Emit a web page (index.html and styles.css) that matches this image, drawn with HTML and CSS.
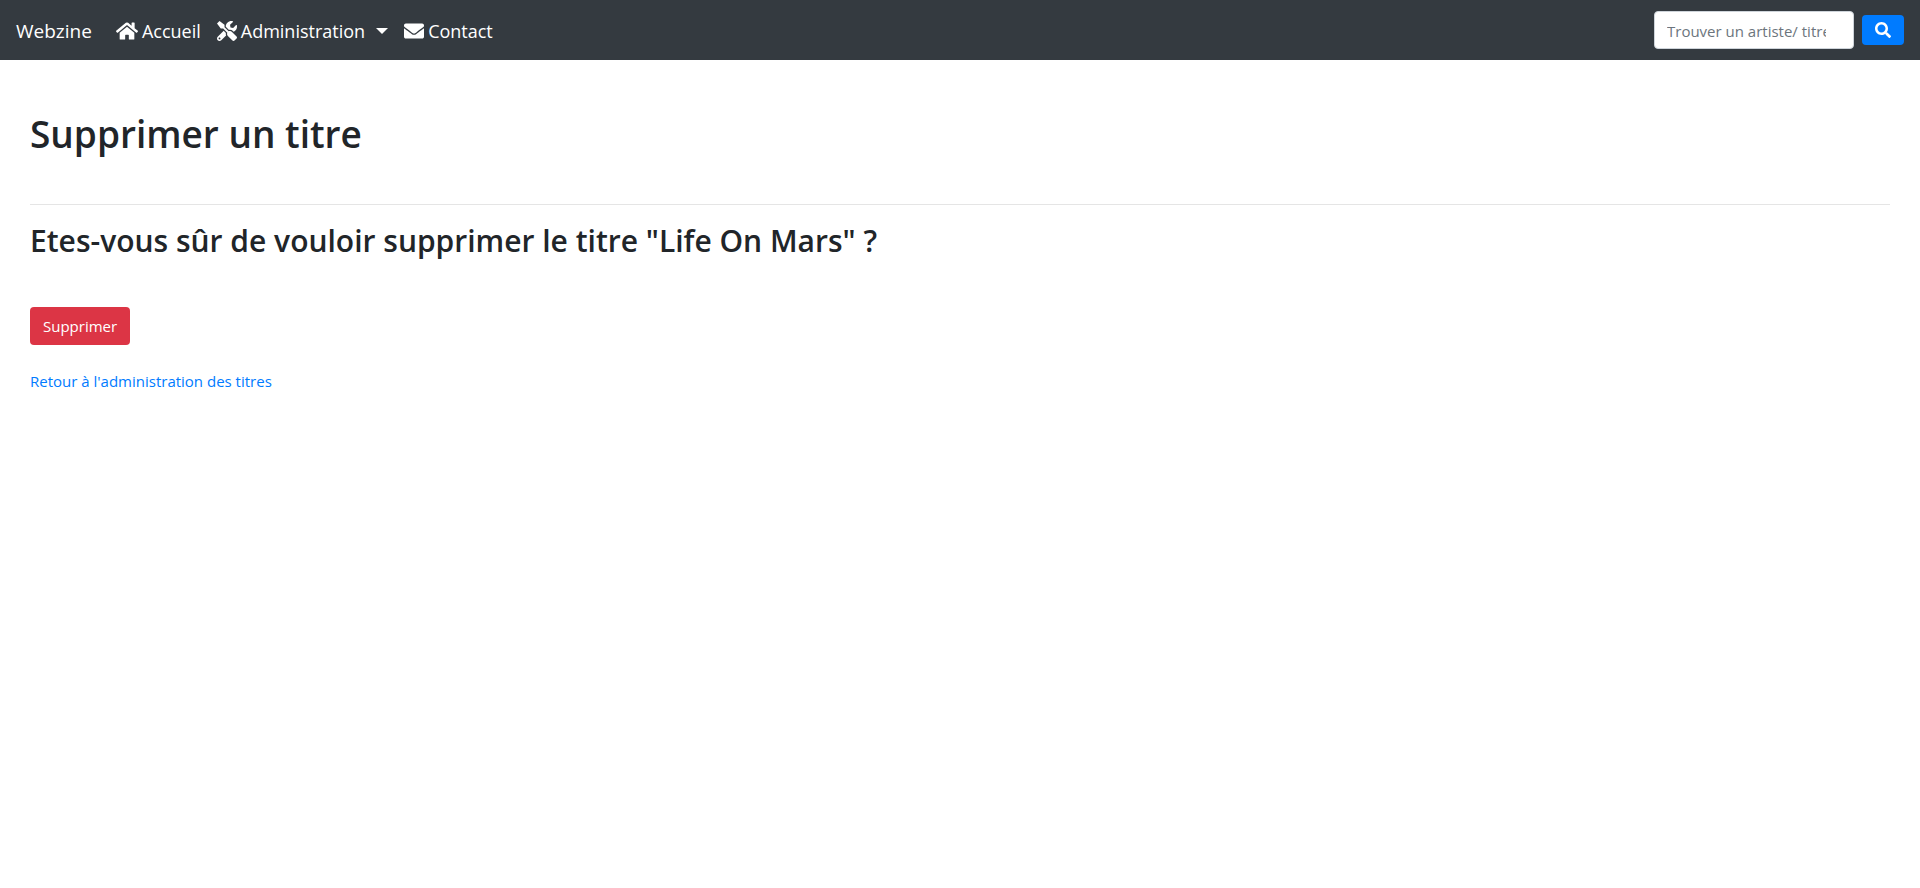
FILE: index.html
```html
<!DOCTYPE html>
<html lang="fr">
<head>
<meta charset="utf-8">
<meta name="viewport" content="width=device-width, initial-scale=1">
<title>Supprimer un titre - Webzine</title>
<link rel="stylesheet" href="styles.css">
</head>
<body>
<header class="navbar">
  <a class="brand" href="#">Webzine</a>
  <nav class="menu">
    <a class="menu-link" href="#"><svg class="icon icon-home" viewBox="0 0 576 512" aria-hidden="true"><path d="M280.37 148.26L96 300.11V464a16 16 0 0 0 16 16l112.06-.29a16 16 0 0 0 15.92-16V368a16 16 0 0 1 16-16h64a16 16 0 0 1 16 16v95.64a16 16 0 0 0 16 16.05L464 480a16 16 0 0 0 16-16V300L295.67 148.26a12.19 12.19 0 0 0-15.3 0zM571.6 251.47L488 182.56V44.05a12 12 0 0 0-12-12h-56a12 12 0 0 0-12 12v72.61L318.47 43a48 48 0 0 0-61 0L4.34 251.47a12 12 0 0 0-1.6 16.9l25.5 31A12 12 0 0 0 45.15 301l235.22-193.74a12.19 12.19 0 0 1 15.3 0L530.9 301a12 12 0 0 0 16.9-1.6l25.5-31a12 12 0 0 0-1.7-16.93z"/></svg>Accueil</a>
    <a class="menu-link" href="#"><svg class="icon" viewBox="0 0 512 512" aria-hidden="true"><path d="M501.1 395.7L384 278.6c-23.1-23.1-57.6-27.6-85.4-13.9L192 158.1V96L64 0 0 64l96 128h62.1l106.6 106.6c-13.6 27.8-9.2 62.3 13.9 85.4l117.1 117.1c14.6 14.6 38.2 14.6 52.7 0l52.7-52.7c14.5-14.6 14.5-38.2 0-52.7zM331.7 225c28.3 0 54.9 11 74.9 31l19.4 19.4c15.8-6.9 30.8-16.5 43.8-29.5 37.1-37.1 49.7-89.3 37.9-136.7-2.2-9-13.5-12.1-20.1-5.5l-74.4 74.4-67.9-11.3L334 98.9l74.4-74.4c6.6-6.6 3.4-17.9-5.7-20.2-47.4-11.7-99.6.9-136.6 37.9-28.5 28.5-41.9 66.1-41.2 103.6l82.1 82.1c8.1-1.9 16.5-2.9 24.7-2.9zm-103.9 82l-56.7-56.7L18.7 402.8c-25 25-25 65.5 0 90.5s65.5 25 90.5 0l123.6-123.6c-7.6-19.9-9.9-41.6-5-62.7zM64 472c-13.2 0-24-10.8-24-24 0-13.3 10.7-24 24-24s24 10.7 24 24c0 13.2-10.7 24-24 24z"/></svg>Administration<span class="caret"></span></a>
    <a class="menu-link" href="#"><svg class="icon" viewBox="0 0 512 512" aria-hidden="true"><path d="M502.3 190.8c3.9-3.1 9.7-.2 9.7 4.7V400c0 26.500-21.500 48-48 48H48c-26.500 0-48-21.500-48-48V195.600c0-5 5.700-7.800 9.700-4.700 22.400 17.400 52.100 39.500 154.100 113.600 21.100 15.400 56.700 47.800 92.200 47.600 35.700.3 72-32.800 92.300-47.600 102-74.100 131.600-96.300 154-113.700zM256 320c23.200.4 56.600-29.200 73.400-41.400 132.700-96.300 142.800-104.700 173.400-128.700 5.800-4.500 9.200-11.500 9.200-18.900v-19c0-26.500-21.500-48-48-48H48c-26.500 0-48 21.500-48 48v19c0 7.400 3.400 14.300 9.200 18.900 30.600 23.900 40.700 32.400 173.400 128.700 16.800 12.200 50.200 41.800 73.400 41.400z"/></svg>Contact</a>
  </nav>
  <form class="search">
    <input class="search-input" type="text" placeholder="Trouver un artiste/ titre" aria-label="Trouver un artiste ou un titre">
    <button class="search-button" type="button" aria-label="Rechercher"><svg class="icon-search" viewBox="0 0 512 512" aria-hidden="true"><path d="M505 442.700L405.300 343c-4.500-4.500-10.600-7-17-7H372c27.600-35.300 44-79.700 44-128C416 93.100 322.900 0 208 0S0 93.100 0 208s93.100 208 208 208c48.300 0 92.700-16.400 128-44v16.300c0 6.400 2.500 12.500 7 17l99.700 99.700c9.400 9.400 24.600 9.400 33.900 0l28.300-28.300c9.400-9.400 9.400-24.600.1-34zM208 336c-70.700 0-128-57.200-128-128 0-70.700 57.200-128 128-128 70.700 0 128 57.200 128 128 0 70.700-57.200 128-128 128z"/></svg></button>
  </form>
</header>
<main class="content">
  <h1 class="title">Supprimer un titre</h1>
  <hr class="rule">
  <h2 class="question">Etes-vous sûr de vouloir supprimer le titre "Life On Mars" ?</h2>
  <form><button class="delete" type="button">Supprimer</button></form>
  <a class="back" href="#">Retour à l'administration des titres</a>
</main>
</body>
</html>
```
FILE: styles.css
```css
* {
  box-sizing: border-box;
}

body {
  margin: 0;
  background: #fff;
  color: #212529;
  font: 15px/24px "Segoe UI", "Open Sans", "Noto Sans", sans-serif;
}

a {
  color: #007bff;
  text-decoration: none;
}

.navbar {
  display: flex;
  align-items: center;
  min-height: 60px;
  padding: 8px 16px;
  background: #343a40;
}

.brand,
.menu-link {
  color: #fff;
  line-height: 30px;
}

.brand {
  margin-right: 24px;
  padding-top: 2px;
  font-size: 19px;
}

.menu {
  display: flex;
  flex: 1;
  gap: 16px;
  padding-top: 2px;
  font-size: 18px;
}

.menu-link {
  display: flex;
  align-items: center;
  gap: 4px;
}

.icon {
  width: 20px;
  height: 20px;
  fill: currentColor;
}

.icon-home {
  width: 22px;
}

.caret {
  margin-left: 7px;
  border: 6px solid transparent;
  border-top-color: currentColor;
  border-bottom: 0;
}

.search {
  display: flex;
  align-items: center;
  gap: 8px;
}

.search-input {
  width: 200px;
  height: 38px;
  padding: 7px 27px 5px 12px;
  border: 1px solid #ced4da;
  border-radius: 4px;
  background: #fff;
  color: #495057;
  font: inherit;
}

.search-input::placeholder {
  color: #6c757d;
  opacity: 1;
}

.search-button {
  display: flex;
  align-items: center;
  justify-content: center;
  width: 42px;
  height: 30px;
  padding: 0;
  border: 0;
  border-radius: 4px;
  background: #007bff;
  color: #fff;
}

.icon-search {
  width: 16px;
  height: 16px;
  fill: currentColor;
}

.content {
  padding: 50px 30px;
}

.title,
.question {
  margin: 0;
  font-weight: 600;
}

.title {
  font-size: 37px;
  line-height: 48px;
}

.rule {
  margin: 46px 0 16px;
  border: 0;
  border-top: 1px solid #e5e5e5;
}

.question {
  margin-bottom: 46px;
  font-size: 30px;
  line-height: 40px;
}

.delete {
  height: 38px;
  margin-bottom: 24px;
  padding: 0 13px;
  border: 0;
  border-radius: 4px;
  background: #dc3545;
  color: #fff;
  font: inherit;
}
```
